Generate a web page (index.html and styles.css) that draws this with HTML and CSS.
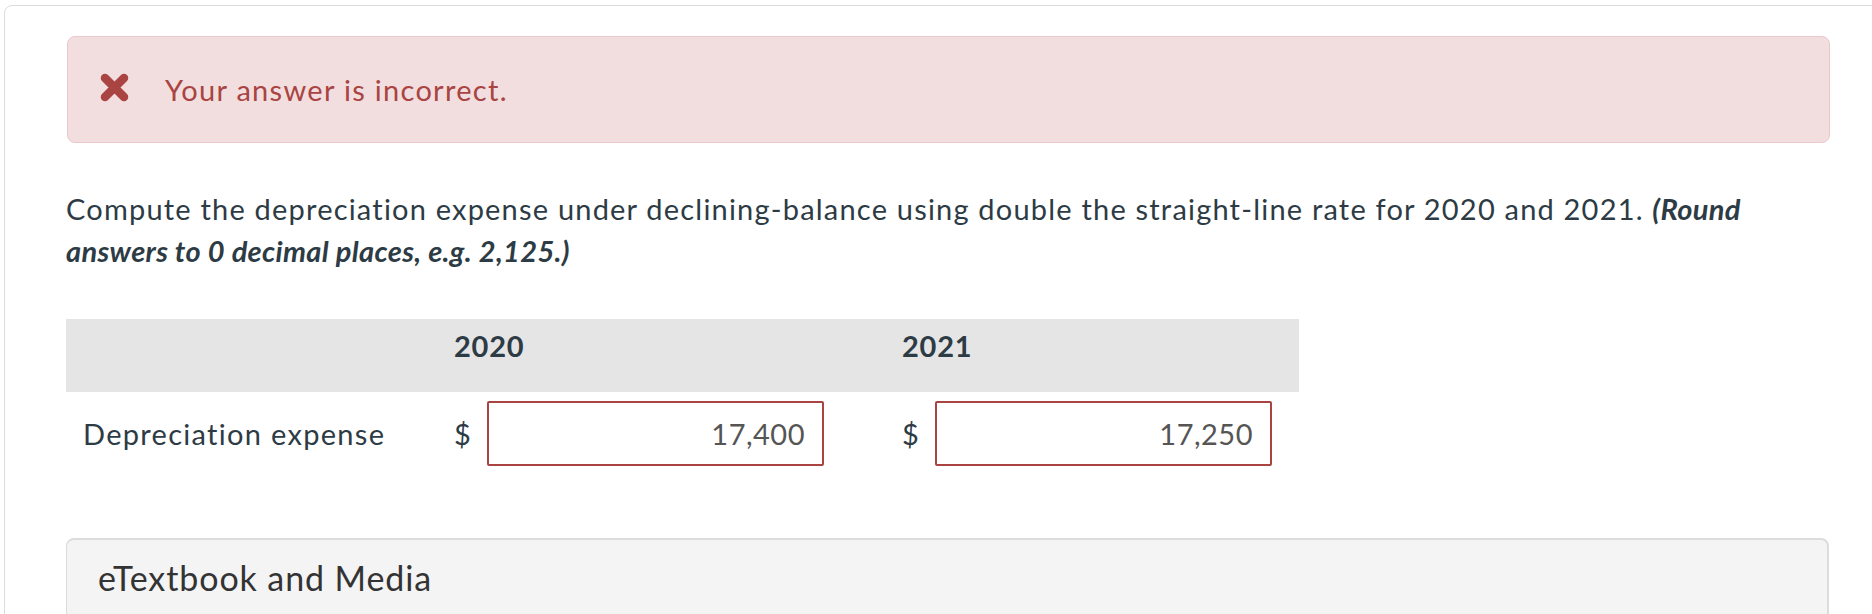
FILE: index.html
```html
<!DOCTYPE html>
<html>
<head>
<meta charset="utf-8">
<link rel="stylesheet" href="styles.css">
</head>
<body>
<div class="card">
  <div class="alert">
    <svg class="alert-icon" width="29" height="29" viewBox="0 0 29 29"><path d="M5 5 L24 24 M24 5 L5 24" stroke="#a94442" stroke-width="8.5" stroke-linecap="round" fill="none"/></svg>
    <span class="alert-text">Your answer is incorrect.</span>
  </div>
  <p class="question">Compute the depreciation expense under declining-balance using double the straight-line rate for 2020 and 2021. <b><i>(Round answers to 0 decimal places, e.g. 2,125.)</i></b></p>
  <div class="answer-table">
    <div class="head head-label"></div>
    <div class="head">2020</div>
    <div class="head">2021</div>
    <div class="cell label">Depreciation expense</div>
    <div class="cell money"><span class="dollar">$</span><span class="input">17,400</span></div>
    <div class="cell money"><span class="dollar">$</span><span class="input">17,250</span></div>
  </div>
  <div class="panel">eTextbook and Media</div>
</div>
</body>
</html>
```

FILE: styles.css
```css
html, body {
  margin: 0;
  padding: 0;
  background: #fff;
  overflow: hidden;
}
body {
  font-family: Lato, "Open Sans", sans-serif;
  font-size: 29px;
  line-height: 42px;
  letter-spacing: 1.2px;
  color: #2d3b45;
}
.card {
  margin: 5px 0 0 4px;
  width: 1950px;
  border: 1px solid #dcdcdc;
  border-radius: 8px;
  padding: 30px 0 40px 62px;
  box-sizing: border-box;
  height: 700px;
}
.alert {
  width: 1763px;
  box-sizing: border-box;
  background: #f2dede;
  border: 1px solid #ebc8cc;
  border-radius: 8px;
  padding: 32px 32px 31px 32px;
  display: flex;
  align-items: center;
  color: #a94442;
}
.alert-icon {
  flex: none;
  margin-top: -5px;
}
.alert-text {
  margin-left: 36px;
  letter-spacing: 1.3px;
}
.question {
  margin: 45px 0 0 -1px;
  width: 1763px;
}
.question b {
  font-weight: 700;
  letter-spacing: 0.35px;
}
.answer-table {
  margin: 47px 0 0 -1px;
  display: grid;
  grid-template-columns: 380px 448px 405px;
  width: 1233px;
}
.head {
  background: #e5e5e5;
  height: 73px;
  box-sizing: border-box;
  padding: 6px 0 0 8px;
  font-weight: 700;
  letter-spacing: 0.8px;
}
.cell {
  display: flex;
  align-items: center;
  padding-top: 9px;
}
.label {
  padding-left: 17px;
  letter-spacing: 1.3px;
}
.money {
  padding-left: 8px;
}
.dollar {
  width: 33px;
}
.input {
  width: 337px;
  height: 65px;
  box-sizing: border-box;
  border: 2px solid #a94442;
  border-radius: 2px;
  text-align: right;
  padding: 0 17px 0 22px;
  line-height: 61px;
  color: #555;
  letter-spacing: 0.5px;
}
.panel {
  margin: 72px 0 0 -1px;
  width: 1763px;
  box-sizing: border-box;
  background: #f4f4f4;
  border: 1px solid #dcdcdc;
  border-top-width: 2px;
  border-right-width: 2px;
  border-radius: 8px;
  padding: 17px 31px;
  color: #333;
  font-size: 34px;
  letter-spacing: 0.9px;
  height: 120px;
}
```
